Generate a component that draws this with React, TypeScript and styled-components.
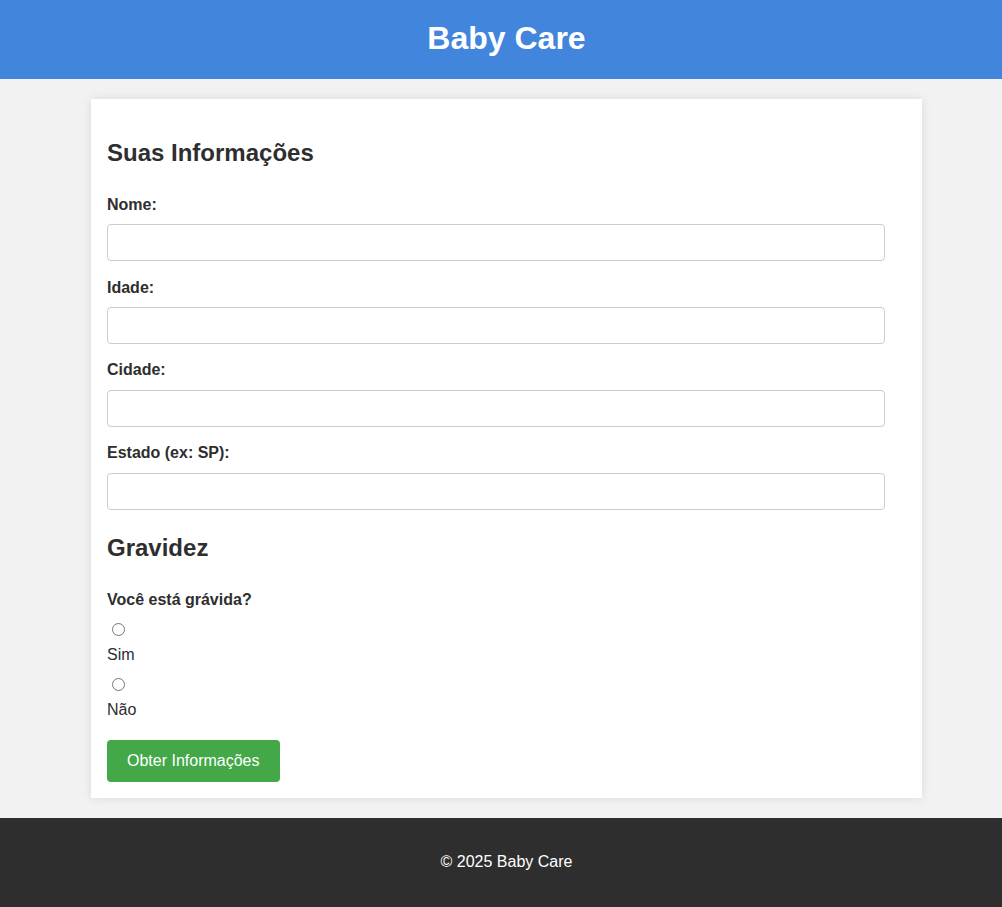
import styled, { createGlobalStyle } from "styled-components";

const GlobalStyle = createGlobalStyle`
  html, body {
    margin: 0;
    padding: 0;
    overflow-x: hidden;
  }
  body {
    background-color: #f2f2f2;
    font-family: "Liberation Sans", Arial, Helvetica, sans-serif;
    color: #2e2e2e;
  }
`;

const Page = styled.div`
  width: 1013px;
  display: flex;
  flex-direction: column;
`;

const Header = styled.header`
  background-color: #4285dc;
  padding: 20px 0 22px;
  text-align: center;
`;

const Logo = styled.h1`
  margin: 0;
  font-size: 32px;
  line-height: 37px;
  font-weight: bold;
  color: #ffffff;
`;

const Main = styled.main`
  padding: 20px 0;
`;

const Card = styled.form`
  width: 831px;
  box-sizing: border-box;
  margin: 0 auto;
  padding: 16px;
  background-color: #ffffff;
  box-shadow: 0 0 10px rgba(0, 0, 0, 0.1);
  display: flex;
  flex-direction: column;
  align-items: flex-start;
`;

const SectionTitle = styled.h2`
  margin: 24px 0 29px;
  font-size: 24px;
  line-height: 28px;
  font-weight: bold;
  color: #2e2e2e;
`;

const Field = styled.div`
  width: 100%;
  display: flex;
  flex-direction: column;
  & + & {
    margin-top: 17.3px;
  }
`;

const Label = styled.label`
  display: block;
  font-size: 16px;
  line-height: 18.4px;
  font-weight: bold;
  color: #2e2e2e;
`;

const Input = styled.input`
  margin-top: 10px;
  width: calc(100% - 21px);
  height: 37px;
  box-sizing: border-box;
  padding: 8px 10px;
  border: 1px solid #cccccc;
  border-radius: 4px;
  font-family: inherit;
  font-size: 16px;
  background: #ffffff;
`;

const Radio = styled.input`
  display: block;
  width: 13px;
  height: 13px;
  margin: 14px 0 0 5px;
`;

const OptionLabel = styled.label`
  display: block;
  margin-top: 10px;
  font-size: 16px;
  line-height: 18.4px;
  color: #2e2e2e;
`;

const Button = styled.button`
  margin-top: 20px;
  height: 42px;
  padding: 0 20px;
  border: none;
  border-radius: 4px;
  background-color: #43a847;
  color: #ffffff;
  font-family: inherit;
  font-size: 16px;
  cursor: pointer;
`;

const Footer = styled.footer`
  background-color: #2e2e2e;
  padding: 34px 0 36px;
  text-align: center;
  color: #ffffff;
  font-size: 16px;
  line-height: 19px;
`;

const fields = [
  { id: "nome", label: "Nome:" },
  { id: "idade", label: "Idade:" },
  { id: "cidade", label: "Cidade:" },
  { id: "estado", label: "Estado (ex: SP):" },
];

const App = () => {
  return (
    <>
      <GlobalStyle />
      <Page>
        <Header>
          <Logo>Baby Care</Logo>
        </Header>
        <Main>
          <Card onSubmit={(e) => e.preventDefault()}>
            <SectionTitle>Suas Informações</SectionTitle>
            {fields.map((f) => (
              <Field key={f.id}>
                <Label htmlFor={f.id}>{f.label}</Label>
                <Input id={f.id} type="text" />
              </Field>
            ))}
            <SectionTitle>Gravidez</SectionTitle>
            <Label>Você está grávida?</Label>
            <Radio type="radio" name="gravida" id="sim" />
            <OptionLabel htmlFor="sim">Sim</OptionLabel>
            <Radio type="radio" name="gravida" id="nao" />
            <OptionLabel htmlFor="nao">Não</OptionLabel>
            <Button type="submit">Obter Informações</Button>
          </Card>
        </Main>
        <Footer>© 2025 Baby Care</Footer>
      </Page>
    </>
  );
};

export default App;
